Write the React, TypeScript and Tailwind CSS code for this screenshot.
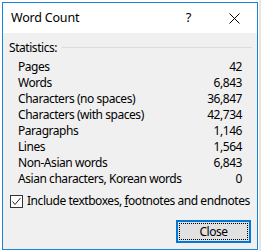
import React from 'react'

const STATS: [string, string][] = [
  ['Pages', '42'],
  ['Words', '6,843'],
  ['Characters (no spaces)', '36,847'],
  ['Characters (with spaces)', '42,734'],
  ['Paragraphs', '1,146'],
  ['Lines', '1,564'],
  ['Non-Asian words', '6,843'],
  ['Asian characters, Korean words', '0'],
]

export default function App() {
  return (
    <div className="w-[261px] h-[251px] bg-white flex font-['Noto_Sans',sans-serif] text-[12px] tracking-[-0.45px] text-black">
      <div className="mt-[2px] ml-[2px] w-[256px] h-[248px] border border-[#1883d7] flex flex-col bg-[#f0f0f0]">
        {/* Title bar */}
        <div className="h-[30px] bg-white flex items-center">
          <span className="ml-[8px] text-[12.5px] tracking-[-0.2px]">Word Count</span>
          <span className="ml-auto mr-[38px] text-[13px]">?</span>
          <svg width="11" height="11" viewBox="0 0 11 11" className="mr-[17px]">
            <path d="M0.5 0.5L10.5 10.5M10.5 0.5L0.5 10.5" stroke="#000" strokeWidth="1" />
          </svg>
        </div>

        {/* Body */}
        <div className="flex-1 flex flex-col pt-[7px]">
          <div className="flex items-center h-[16px] pl-[6px] pr-[5px]">
            <span className="leading-[16px]">Statistics:</span>
            <div className="flex-1 h-px bg-[#dcdcdc] ml-[5px] mt-[-2px]" />
          </div>

          <div className="mt-[3px] pl-[15px] pr-[15px] flex flex-col">
            {STATS.map(([label, value]) => (
              <div key={label} className="h-[16px] flex items-center justify-between leading-[16px]">
                <span>{label}</span>
                <span>{value}</span>
              </div>
            ))}
          </div>

          <div className="mt-[6px] h-[16px] flex items-center pl-[7px]">
            <div className="shrink-0 w-[13px] h-[13px] border border-[#333] bg-white flex items-center justify-center">
              <svg width="11" height="11" viewBox="0 0 11 11">
                <path d="M1.5 5.5L4 8.5L9.5 2" fill="none" stroke="#222" strokeWidth="1" />
              </svg>
            </div>
            <span className="ml-[4px] leading-[16px] whitespace-nowrap">
              Include textboxes, <span className="underline">f</span>ootnotes and endnotes
            </span>
          </div>

          <div className="mt-[11px] flex justify-end pr-[6px]">
            <button className="w-[75px] h-[23px] border-2 border-[#0078d7] bg-[#e1e1e1] p-[1px] flex">
              <span className="flex-1 border border-dotted border-black flex items-center justify-center leading-none">
                Close
              </span>
            </button>
          </div>
        </div>
      </div>
      <div className="ml-[1px] w-[2px] h-full bg-[#e6e6e6]" />
    </div>
  )
}
